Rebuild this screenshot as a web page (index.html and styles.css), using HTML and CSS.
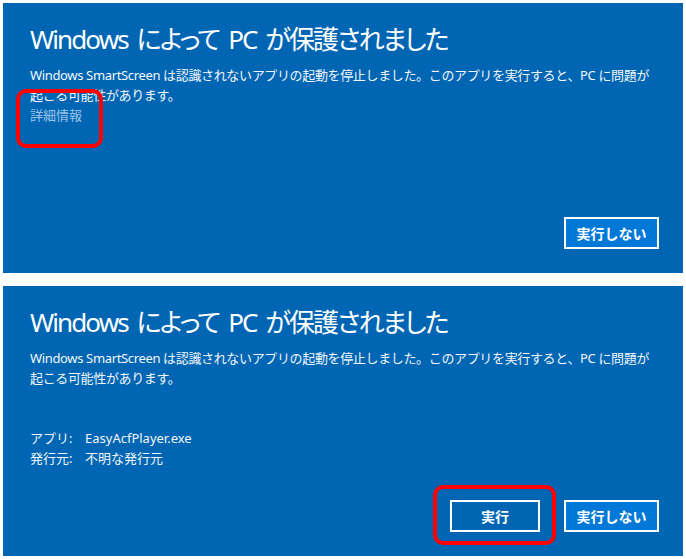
FILE: index.html
```html
<!DOCTYPE html>
<html lang="ja">
<head>
    <meta charset="UTF-8">
    <meta name="viewport" content="width=device-width, initial-scale=1.0">
    <title>Windows SmartScreen</title>
    <link rel="stylesheet" href="styles.css">
</head>
<body>
    <div class="wrap">
        <!-- 1: 詳細情報 を開く前 -->
        <section class="panel">
            <h1 class="title">Windows によって PC が保護されました</h1>
            <p class="message">Windows SmartScreen は認識されないアプリの起動を停止しました。このアプリを実行すると、PC に問題が起こる可能性があります。</p>
            <div class="more">
                <a class="more-link">詳細情報</a>
                <span class="mark mark-more"></span>
            </div>
            <div class="actions">
                <button class="btn btn-cancel">実行しない</button>
            </div>
        </section>

        <!-- 2: 詳細情報 を開いた後 -->
        <section class="panel">
            <h1 class="title">Windows によって PC が保護されました</h1>
            <p class="message">Windows SmartScreen は認識されないアプリの起動を停止しました。このアプリを実行すると、PC に問題が起こる可能性があります。</p>
            <dl class="info">
                <dt>アプリ:</dt><dd>EasyAcfPlayer.exe</dd>
                <dt>発行元:</dt><dd>不明な発行元</dd>
            </dl>
            <div class="actions">
                <div class="run-wrap">
                    <button class="btn btn-run">実行</button>
                    <span class="mark mark-run"></span>
                </div>
                <button class="btn btn-cancel">実行しない</button>
            </div>
        </section>
    </div>
</body>
</html>
```

FILE: styles.css
```css
*{padding:0; margin:0; box-sizing:border-box;}
:root{
    --panel-bg:#0066b3;
    --btn-bg:#0078d7;
    --text:#f2f6fb;
    --link:#9cc4ea;
    --mark:#ff0000;
}

html,body{background:#fff;}
body{
    font-family:"Noto Sans","Noto Sans CJK JP",sans-serif;
    color:var(--text);
}

.wrap{
    padding:3px;
    display:flex; flex-flow:column; gap:13px;
}

.panel{
    width:680px; height:270px;
    background-color:var(--panel-bg);
    padding:16px 24px 24px 27px;
    display:flex; flex-flow:column;
}

.title{
    font-weight:normal;
    font-size:26px; line-height:40px;
    font-feature-settings:"palt";
    letter-spacing:-1.9px;
    word-spacing:4px;
    color:#fff;
}

.message{
    margin-top:6px;
    width:630px;
    font-size:13px; line-height:20px;
    letter-spacing:-0.35px;
}

/* 詳細情報 */
.more{
    position:relative;
    align-self:flex-start;
    font-size:13px; line-height:20px;
}
.more-link{color:var(--link); cursor:pointer;}

.mark{
    position:absolute;
    border:4px solid var(--mark);
    border-radius:10px;
    pointer-events:none;
}
.mark-more{left:-14px; top:-16px; width:87px; height:59px;}
.mark-run{left:-17px; top:-15px; width:123px; height:60px;}

/* アプリ / 発行元 */
.info{
    margin-top:40px;
    display:grid; grid-template-columns:55px auto;
    font-size:13px; line-height:20px;
}

.actions{
    margin-top:auto;
    display:flex; justify-content:flex-end; gap:24px;
}
.run-wrap{position:relative;}

.btn{
    display:block;
    height:32px;
    border:2px solid #fff;
    color:#fff;
    font-family:inherit;
    font-size:14px; font-weight:bold;
    background-color:var(--btn-bg);
}
.btn-cancel{width:95px;}
.btn-run{width:90px; background-color:var(--panel-bg);}
```
